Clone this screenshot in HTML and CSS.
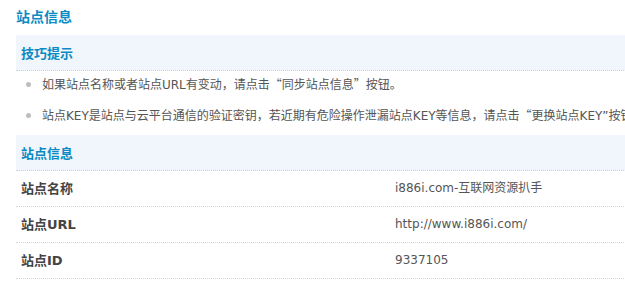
FILE: index.html
```html
<!DOCTYPE html>
<html lang="zh-CN">
<head>
<meta charset="utf-8">
<title>站点信息</title>
<link rel="stylesheet" href="styles.css">
</head>
<body>
<div class="page">
  <h2 class="title">站点信息</h2>
  <div class="band">技巧提示</div>
  <ul class="tips">
    <li>如果站点名称或者站点URL有变动，请点击<span class="q">“</span>同步站点信息<span class="q">”</span>按钮。</li>
    <li>站点KEY是站点与云平台通信的验证密钥，若近期有危险操作泄漏站点KEY等信息，请点击<span class="q">“</span>更换站点KEY”按钮。</li>
  </ul>
  <div class="band">站点信息</div>
  <div class="row"><div class="label">站点名称</div><div class="value">i886i.com-互联网资源扒手</div></div>
  <div class="row"><div class="label">站点URL</div><div class="value">http://www.i886i.com/</div></div>
  <div class="row"><div class="label">站点ID</div><div class="value">9337105</div></div>
</div>
</body>
</html>
```
FILE: styles.css
```css
html, body {
  margin: 0;
  padding: 0;
  overflow: hidden;
  background: #fff;
}
body {
  font-family: "DejaVu Sans", "Noto Sans CJK SC", sans-serif;
  font-size: 12px;
  color: #555;
}
.page {
  width: 780px;
  padding-left: 16px;
}
.title {
  margin: 0 0 2px 0;
  height: 33px;
  line-height: 33px;
  font-size: 14px;
  font-weight: bold;
  color: #0b8bc4;
  font-family: "Noto Sans CJK SC", sans-serif;
}
.band {
  height: 35px;
  line-height: 35px;
  padding-left: 5px;
  background: #f1f6fc;
  border-bottom: 1px dotted #c9d3dc;
  font-weight: bold;
  font-size: 13px;
  color: #0a8ac2;
  font-family: "Noto Sans CJK SC", sans-serif;
}
.tips {
  list-style: none;
  margin: 0;
  padding: 0 0 2px 0;
  white-space: nowrap;
}
.tips li {
  position: relative;
  height: 28px;
  line-height: 28px;
  margin-bottom: 3px;
  padding-left: 26px;
  color: #555;
}
.tips li::before {
  content: "";
  position: absolute;
  left: 10px;
  top: 11px;
  width: 5px;
  height: 5px;
  border-radius: 50%;
  background: #bdbdbd;
}
.q {
  font-family: "Noto Sans CJK SC", sans-serif;
  line-height: 1;
}
.row {
  display: flex;
  height: 35px;
  line-height: 35px;
  border-bottom: 1px dotted #cfd9e0;
}
.label {
  width: 369px;
  padding-left: 5px;
  font-weight: bold;
  color: #444;
  font-size: 13px;
}
.value {
  padding-left: 5px;
  color: #555;
}
```
